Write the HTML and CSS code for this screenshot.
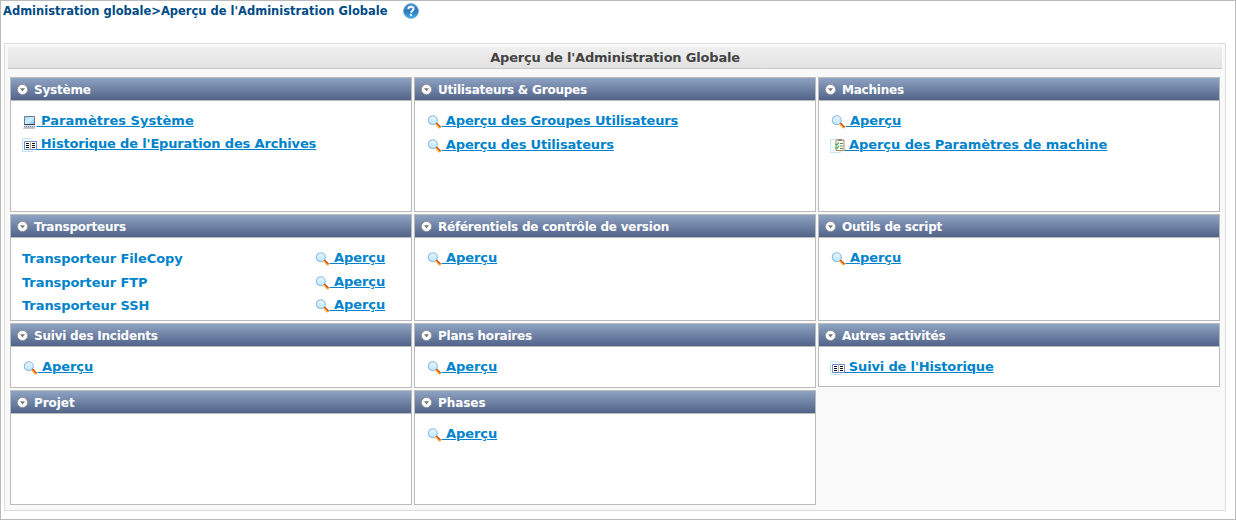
FILE: index.html
```
<!DOCTYPE html>
<html lang="fr">
<head>
<meta charset="utf-8">
<title>Aperçu de l'Administration Globale</title>
<link rel="stylesheet" href="styles.css">
</head>
<body>
<svg class="defs" width="0" height="0">
  <defs>
    <linearGradient id="lens" x1="0" y1="0" x2="0" y2="1"><stop offset="0" stop-color="#e8f6fd"/><stop offset="1" stop-color="#b9e8fb"/></linearGradient>
    <linearGradient id="help" x1="0" y1="0" x2="0" y2="1"><stop offset="0" stop-color="#5597d2"/><stop offset=".5" stop-color="#2878bd"/><stop offset="1" stop-color="#45b4e8"/></linearGradient>
    <linearGradient id="screen" x1="0" y1="0" x2="1" y2="1"><stop offset="0" stop-color="#9fd2f4"/><stop offset=".5" stop-color="#d0f0ff"/><stop offset="1" stop-color="#6db5e8"/></linearGradient>
    <symbol id="toggle" viewBox="0 0 12 12"><circle cx="6.500" cy="5.500" r="5.100" fill="#fff" stroke="#92929a" stroke-width="1"/><path d="M4 4.200h5L6.500 7.400z" fill="#777"/></symbol>
    <symbol id="search" viewBox="0 0 14 14"><circle cx="5.800" cy="5.200" r="4.500" fill="url(#lens)" stroke="#8fb9de" stroke-width="1.100"/><path d="M9.300 8.200l4.200 4.400" stroke="#dc3b12" stroke-width="1.900"/><path d="M8.700 9l4 4.200" stroke="#f8b624" stroke-width="1.400"/></symbol>
    <symbol id="pc" viewBox="0 0 14 14"><path d="M1.500 1.500h10v8h-10z" fill="url(#screen)" stroke="#6c7b99"/><path d="M1 9.500h11" stroke="#39415c"/><path d="M1.500 10.500h10l1 3h-12z" fill="#c3cad6"/><path d="M1 11.500h11M0.500 13.200h12" stroke="#8490a5" stroke-dasharray="1 1"/></symbol>
    <symbol id="book" viewBox="0 0 15 14"><path d="M.5.5h8l2 3v10H.5z" fill="#f5fbff" stroke="#c5e2f2"/><path d="M2.500 3.500h12v8h-12z" fill="#fff" stroke="#6f8ccb"/><path d="M8.500 3v9" stroke="#b1a59b"/><path d="M4 5.500h3M4 7.500h3M4 9.500h3M10 5.500h3M10 7.500h3M10 9.500h3" stroke="#111"/></symbol>
    <symbol id="checklist" viewBox="0 0 15 14"><path d="M.5 .5h10v13H.5z" fill="#fafdff" stroke="#c9e5f3"/><path d="M6 1h8v10.500H6z" fill="#fff" stroke="#a98656"/><path d="M8 0h4v2H8z" fill="#888"/><path d="M10 4.500h3M10 7h3M10 9.500h3" stroke="#777"/><path d="M5.500 5l1.200 1.200L9 3.500M5.500 8.500l1.200 1.200 2.300-2.700" fill="none" stroke="#39b54a" stroke-width="1.200"/></symbol>
  </defs>
</svg>
<div class="page">
  <div class="crumbs"><span class="trail">Administration globale&gt;Aperçu de l'Administration Globale</span>
    <svg class="help" viewBox="0 0 16 16"><circle cx="8" cy="8" r="7.500" fill="url(#help)" stroke="#74a6d0" stroke-width=".7"/><path d="M5.400 6.100C5.500 2.900 10.700 3 10.500 6c-.1 1.700-2.400 1.700-2.400 3.700" fill="none" stroke="#fff" stroke-width="1.900"/><path d="M7.100 10.900h2v1.900h-2z" fill="#fff"/></svg>
  </div>
  <div class="panel">
    <h1 class="title"><span>Aperçu de l'Administration Globale</span></h1>
    <div class="grid">
      <section class="card"><h2 class="head"><svg class="toggle"><use href="#toggle"/></svg>Système</h2>
        <div class="body"><a class="link doc roomy"><svg class="icon"><use href="#pc"/></svg><span>&nbsp;Paramètres Système</span></a><a class="link doc raised"><svg class="icon wide"><use href="#book"/></svg><span>&nbsp;Historique de l'Epuration des Archives</span></a></div></section>
      <section class="card"><h2 class="head"><svg class="toggle"><use href="#toggle"/></svg>Utilisateurs &amp; Groupes</h2>
        <div class="body"><a class="link"><svg class="icon"><use href="#search"/></svg><span>&nbsp;Aperçu des Groupes Utilisateurs</span></a><a class="link"><svg class="icon"><use href="#search"/></svg><span>&nbsp;Aperçu des Utilisateurs</span></a></div></section>
      <section class="card"><h2 class="head"><svg class="toggle"><use href="#toggle"/></svg>Machines</h2>
        <div class="body"><a class="link single"><svg class="icon"><use href="#search"/></svg><span>&nbsp;Aperçu</span></a><a class="link doc even"><svg class="icon wide"><use href="#checklist"/></svg><span>&nbsp;Aperçu des Paramètres de machine</span></a></div></section>

      <section class="card"><h2 class="head"><svg class="toggle"><use href="#toggle"/></svg>Transporteurs</h2>
        <div class="body">
          <div class="row"><span class="name">Transporteur FileCopy</span><a class="link single"><svg class="icon"><use href="#search"/></svg><span>&nbsp;Aperçu</span></a></div>
          <div class="row"><span class="name">Transporteur FTP</span><a class="link single"><svg class="icon"><use href="#search"/></svg><span>&nbsp;Aperçu</span></a></div>
          <div class="row raised"><span class="name">Transporteur SSH</span><a class="link single"><svg class="icon"><use href="#search"/></svg><span>&nbsp;Aperçu</span></a></div>
        </div></section>
      <section class="card"><h2 class="head"><svg class="toggle"><use href="#toggle"/></svg>Référentiels de contrôle de version</h2>
        <div class="body"><a class="link single"><svg class="icon"><use href="#search"/></svg><span>&nbsp;Aperçu</span></a></div></section>
      <section class="card"><h2 class="head"><svg class="toggle"><use href="#toggle"/></svg>Outils de script</h2>
        <div class="body"><a class="link single"><svg class="icon"><use href="#search"/></svg><span>&nbsp;Aperçu</span></a></div></section>

      <section class="card"><h2 class="head"><svg class="toggle"><use href="#toggle"/></svg>Suivi des Incidents</h2>
        <div class="body"><a class="link single"><svg class="icon"><use href="#search"/></svg><span>&nbsp;Aperçu</span></a></div></section>
      <section class="card"><h2 class="head"><svg class="toggle"><use href="#toggle"/></svg>Plans horaires</h2>
        <div class="body"><a class="link single"><svg class="icon"><use href="#search"/></svg><span>&nbsp;Aperçu</span></a></div></section>
      <section class="card short"><h2 class="head"><svg class="toggle"><use href="#toggle"/></svg>Autres activités</h2>
        <div class="body"><a class="link doc"><svg class="icon wide"><use href="#book"/></svg><span>&nbsp;Suivi de l'Historique</span></a></div></section>

      <section class="card"><h2 class="head even"><svg class="toggle"><use href="#toggle"/></svg>Projet</h2></section>
      <section class="card"><h2 class="head even"><svg class="toggle"><use href="#toggle"/></svg>Phases</h2>
        <div class="body"><a class="link single"><svg class="icon"><use href="#search"/></svg><span>&nbsp;Aperçu</span></a></div></section>
    </div>
  </div>
</div>
</body>
</html>
```
FILE: styles.css
```
* { box-sizing: border-box; }
body { margin: 0; font-family: Verdana, "DejaVu Sans", sans-serif; font-weight: bold; background: #fff; }
.defs { display: block; }
.page { width: 1236px; height: 520px; border: 1px solid #bbb; overflow: hidden; }
.crumbs { display: flex; height: 42px; padding: 2px 0 0 2px; gap: 16px; color: #004b85; font-size: 11.5px; line-height: 17px; white-space: nowrap; }
.trail { width: 384px; }
.help { width: 16px; height: 16px; }
.panel { margin-left: 3px; width: 1222px; height: 468px; border: 1px solid #ddd; background: #f9f9f9; padding: 3px; }
.title { margin: 0; height: 22px; border-bottom: 1px solid #c8c8c8; background: linear-gradient(#f0f0f0, #e2e2e2); color: #444; font-size: 13px; line-height: 21px; text-align: center; letter-spacing: -.19px; }
.grid { display: grid; grid-template-columns: repeat(3, 402px); grid-template-rows: 135px 107px 65px 115px; gap: 2px; padding: 8px 2px 0; }
.card { background: #fff; border: 1px solid #bbb; }
.short { height: 64px; }
.head { display: flex; align-items: center; gap: 6px; margin: 0; height: 23px; padding: 1px 0 0 5px; border-bottom: 1px solid #bbb; background: linear-gradient(#8fa3c3, #516389); color: #fff; font-size: 12px; line-height: 20px; letter-spacing: -.22px; white-space: nowrap; }
.toggle { width: 12px; height: 12px; flex: none; }
.body { display: flex; flex-direction: column; align-items: flex-start; gap: 8px; padding: 12px 0 0 12px; font-size: 13px; line-height: 16px; letter-spacing: -.16px; white-space: nowrap; }
.link { display: flex; height: 16px; color: #0083cb; }
.link span { padding-left: .5px; text-decoration: underline; text-decoration-thickness: 1px; text-underline-offset: 1px; }
.icon { width: 14px; height: 14px; margin-top: 2px; flex: none; }
.wide { width: 15px; margin-left: -1px; }
.doc .icon { margin-right: -1px; }
.row { display: flex; width: 380px; margin-left: -1px; }
.name { width: 293px; padding-top: 1px; height: 16px; color: #0083cb; letter-spacing: -.08px; }
.raised { margin-top: -1px; }
.single, .even { letter-spacing: -.06px; }
.roomy { letter-spacing: .03px; }
```
